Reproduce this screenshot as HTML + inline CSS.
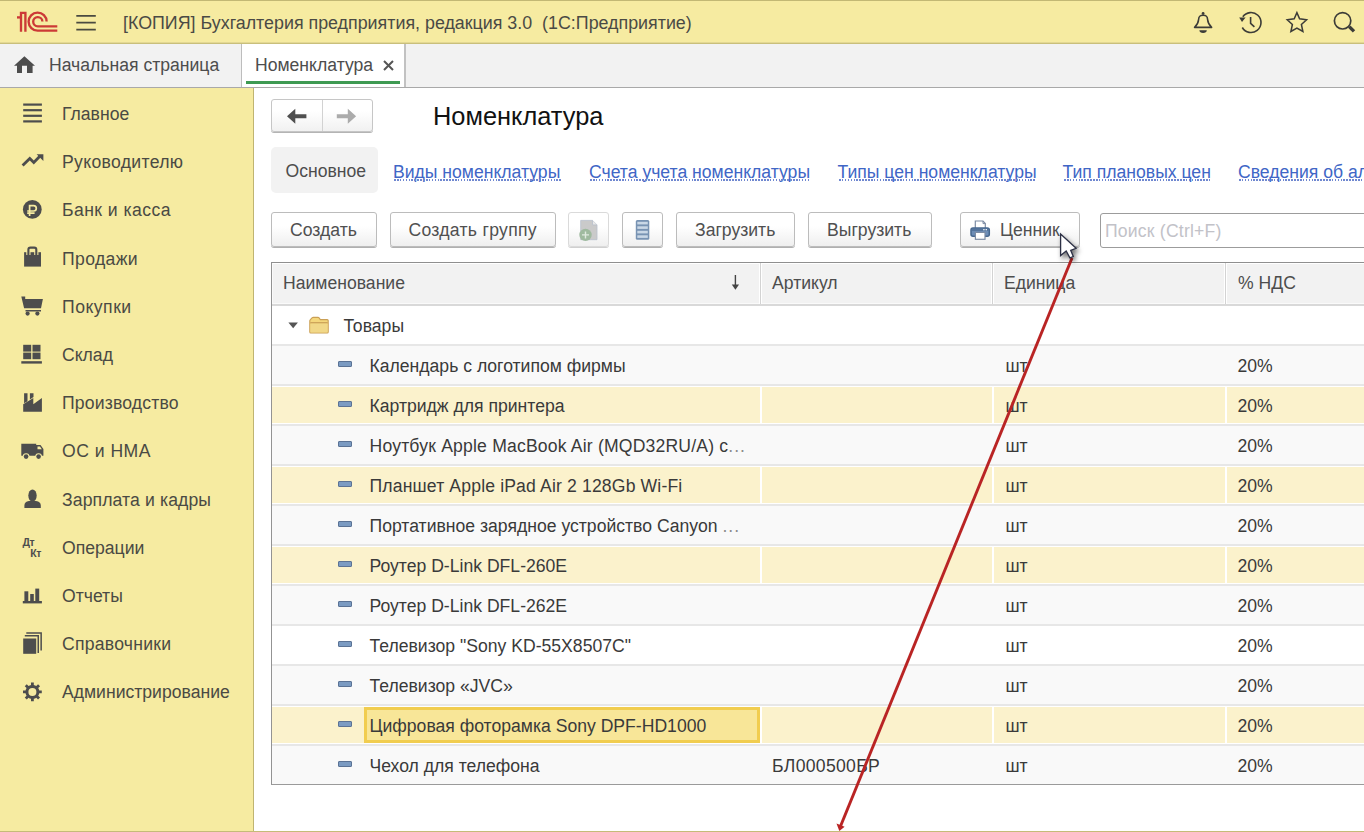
<!DOCTYPE html>
<html><head><meta charset="utf-8">
<style>
*{box-sizing:border-box;margin:0;padding:0}
html,body{width:1364px;height:832px;overflow:hidden;background:#fff}
body{position:relative;font-family:"Liberation Sans",sans-serif;font-size:17.6px;color:#4d4d4d}
.a{position:absolute}
.t{position:absolute;white-space:pre;line-height:20px;height:20px}
#hdr{left:0;top:0;width:1364px;height:44px;background:#f6eba1;border-top:1px solid #c2b874;border-bottom:1px solid #c9bf7b;box-shadow:inset 0 -1px 0 #e3d894}
#tabs{left:0;top:44px;width:1364px;height:44px;background:#f2f2f2;border-bottom:1px solid #a9a9a9}
#side{left:0;top:88px;width:254px;height:744px;background:#f6eba1;border-right:1px solid #c0b571}
#bot{left:0;top:831px;width:1364px;height:1px;background:#c5bb78}
.btn{position:absolute;height:36px;border:1px solid #bcbcbc;border-radius:3px;background:linear-gradient(#fff 40%,#efefef);box-shadow:0 1px 0 #b0b0b0}
.row{position:absolute;left:272px;width:1092px;height:40px;border-bottom:1px solid #e3e3e3}
.g{background:#f9f9f9}.w{background:#fff}.y{background:#fbf0cb}
.ic{position:absolute;width:14px;height:6px;background:#7b9bc2;border:1px solid #5b7395;border-radius:1px;left:338px}
</style></head><body>
<div id="hdr" class="a"></div>
<div id="tabs" class="a"></div>
<div id="side" class="a"></div>

<!-- header content -->
<svg class="a" style="left:0;top:0" width="1364" height="43">
  <g fill="none" stroke="#cc3a36" stroke-width="2.35">
    <path d="M17 17.4 H21.5"/><path d="M21 31.8 V12.9 H25.4 V31.8"/>
    <path d="M46.6 21.5 A9 9 0 1 0 37.8 30.6 H57.3"/>
    <path d="M42.4 21.5 A4.6 4.6 0 1 0 37.8 26.3 H57.3"/>
  </g>
  <g stroke="#4a4a40" stroke-width="1.6">
    <path d="M76.3 15.9 H95.8 M76.3 22.6 H95.8 M76.3 29.6 H95.8"/>
  </g>
</svg>
<div class="t" style="left:123px;top:13px;font-size:17.85px;color:#4a4a45">[КОПИЯ] Бухгалтерия предприятия, редакция 3.0  (1С:Предприятие)</div>


<svg class="a" style="left:1180px;top:0" width="184" height="43">
 <g fill="none" stroke="#3c3c38" stroke-width="1.6" transform="translate(-1180,0)">
  <path d="M1194.6 27.4 C1197.5 24.5 1198.4 22.5 1198.6 19.5 C1198.8 16.3 1199.6 15.3 1203.1 15.3 C1206.6 15.3 1207.4 16.3 1207.6 19.5 C1207.8 22.5 1208.7 24.5 1211.6 27.4 Z" stroke-linejoin="round"/>
  <path d="M1250.6 17 V23.3 L1254.4 26.8"/>
  <path d="M1242.8 16.8 A10 10 0 1 1 1242.3 27.5"/>
  <path d="M1296.9 12.6 L1299.6 18.7 L1306.6 19.8 L1301.4 24.5 L1302.9 31.5 L1296.9 28 L1290.9 31.5 L1292.4 24.5 L1287.2 19.8 L1294.2 18.7 Z" stroke-linejoin="miter" stroke-width="1.5"/>
  <circle cx="1342.6" cy="20.8" r="8.2" stroke-width="1.7"/>
 </g>
 <g fill="#3c3c38" transform="translate(-1180,0)">
  <circle cx="1203.1" cy="13.5" r="1.4"/>
  <path d="M1199.4 30.3 H1206.8 Q1206.6 32.9 1203.1 32.9 Q1199.6 32.9 1199.4 30.3 Z"/>
  <path d="M1239.2 17.4 L1245.6 17.6 L1242 22 Z"/>
  <path d="M1348 27.8 L1350.4 25.4 L1355.2 30.2 L1352.8 32.6 Z"/>
 </g>
</svg>

<!-- tabs -->
<div class="a" style="left:242px;top:44px;width:162px;height:43px;background:#fff"></div>
<div class="a" style="left:241px;top:44px;width:1px;height:43px;background:#bdbdbd"></div>
<div class="a" style="left:404px;top:44px;width:2px;height:43px;background:#c2c2c2"></div>
<div class="a" style="left:246px;top:81px;width:154px;height:3px;background:#3e9a52"></div>
<svg class="a" style="left:14px;top:56px" width="22" height="18"><path d="M10.4 0.2 L21 9.8 H18.6 V17 H13 V9.8 H8 V17 H3 V9.8 H0 Z" fill="#4d4d4d"/></svg>
<div class="t" style="left:49px;top:55px">Начальная страница</div>
<div class="t" style="left:255px;top:55px">Номенклатура</div>
<svg class="a" style="left:382px;top:59px" width="13" height="13"><path d="M2 2 L11 11 M11 2 L2 11" stroke="#555" stroke-width="2"/></svg>

<div class="t" style="left:62px;top:104.0px;color:#4a4a44">Главное</div>
<div class="t" style="left:62px;top:152.2px;color:#4a4a44;letter-spacing:0.33px">Руководителю</div>
<div class="t" style="left:62px;top:200.4px;color:#4a4a44;letter-spacing:0.44px">Банк и касса</div>
<div class="t" style="left:62px;top:248.6px;color:#4a4a44;letter-spacing:0.37px">Продажи</div>
<div class="t" style="left:62px;top:296.8px;color:#4a4a44;letter-spacing:0.5px">Покупки</div>
<div class="t" style="left:62px;top:345.0px;color:#4a4a44">Склад</div>
<div class="t" style="left:62px;top:393.2px;color:#4a4a44;letter-spacing:0.17px">Производство</div>
<div class="t" style="left:62px;top:441.4px;color:#4a4a44;letter-spacing:0.48px">ОС и НМА</div>
<div class="t" style="left:62px;top:489.6px;color:#4a4a44;letter-spacing:0.12px">Зарплата и кадры</div>
<div class="t" style="left:62px;top:537.8px;color:#4a4a44">Операции</div>
<div class="t" style="left:62px;top:586.0px;color:#4a4a44">Отчеты</div>
<div class="t" style="left:62px;top:634.2px;color:#4a4a44;letter-spacing:0.24px">Справочники</div>
<div class="t" style="left:62px;top:682.4px;color:#4a4a44">Администрирование</div>
<svg class="a" style="left:0;top:88px" width="253" height="744">
 <g fill="#4d4d4d" transform="translate(0,-88)">
  <rect x="23.2" y="103.5" width="18.7" height="2.2"/><rect x="23.2" y="109.1" width="18.7" height="2.2"/><rect x="23.2" y="114.7" width="18.7" height="2.2"/><rect x="23.2" y="120.3" width="18.7" height="2.2"/>
  <path d="M22.6 165.6 L29.8 158.4 L33.8 162.4 L39.6 156.6" fill="none" stroke="#4d4d4d" stroke-width="2.8"/>
  <path d="M36.6 154.2 H43.4 V161 Z"/>
  <circle cx="32.3" cy="209.4" r="9.4"/>
  <path d="M29.6 216 V205.6 H33.6 A2.7 2.7 0 0 1 33.6 211 H27.2 M27.2 213.2 H34.6" fill="none" stroke="#f6eba1" stroke-width="1.7"/>
  <path d="M24.1 252.2 H41 V266.6 H24.1 Z"/>
  <path d="M28.4 255 V249.6 Q28.4 247.6 30.4 247.6 H34.3 Q36.3 247.6 36.3 249.6 V255" fill="none" stroke="#f6eba1" stroke-width="4.2"/><path d="M28.4 255 V249.6 Q28.4 247.6 30.4 247.6 H34.3 Q36.3 247.6 36.3 249.6 V255" fill="none" stroke="#4d4d4d" stroke-width="2.1"/>
  <path d="M21.3 296.4 H25.2 L25.2 299.1 H42.9 L41 308.3 H24.1 Z"/>
  <rect x="25.5" y="310" width="15.5" height="1.5"/><circle cx="27.6" cy="313.6" r="2.1"/><circle cx="37.4" cy="313.6" r="2.1"/>
  <rect x="23.2" y="344.8" width="8" height="6.8"/><rect x="32.5" y="344.8" width="8" height="6.8"/><rect x="23.2" y="352.6" width="8" height="6.6"/><rect x="32.5" y="352.6" width="8" height="6.6"/>
  <rect x="21.3" y="361.2" width="20.6" height="2.4"/>
  <path d="M23.2 411.7 V404.2 L33.3 398 V404.2 L41.9 398 V411.7 Z"/>
  <path d="M24.1 393.2 H27.5 V401.2 L24.1 403.2 Z M29.9 393.2 H33.5 V397 L29.9 399.4 Z"/>
  <path d="M21.3 443.7 H36.2 V445.1 H40.5 L43.4 449 V455.7 H21.3 Z"/>
  <path d="M37.5 446.6 H40 L41.8 449.3 H37.5 Z" fill="#f6eba1"/>
  <circle cx="26.1" cy="456.6" r="3.4" fill="#f6eba1"/><circle cx="38.6" cy="456.6" r="3.4" fill="#f6eba1"/>
  <circle cx="26.1" cy="456.6" r="2.3"/><circle cx="38.6" cy="456.6" r="2.3"/>
  <ellipse cx="32.5" cy="495.6" rx="4.2" ry="6.2"/>
  <path d="M24.4 508.1 V505.5 Q24.4 501.5 29 501 H36 Q40.8 501.5 40.8 505.5 V508.1 Z"/>
  <text x="22.5" y="546.4" font-size="10.5" font-weight="bold" font-family="Liberation Sans" letter-spacing="-0.5">Дт</text>
  <text x="30.3" y="556.6" font-size="10.5" font-weight="bold" font-family="Liberation Sans" letter-spacing="-0.5">Кт</text>
  <rect x="22.8" y="601" width="19.1" height="2.4"/><rect x="24.4" y="591.3" width="3.9" height="10"/><rect x="30.2" y="594" width="3.6" height="7.5"/><rect x="35.3" y="588.6" width="3.9" height="12.5"/>
  <path d="M26.3 632.2 H41.9 V650.5 H40.4 V633.7 H26.3 Z"/>
  <path d="M24.8 635.1 H39 V652.9 H37.5 V636.6 H24.8 Z"/>
  <rect x="23.2" y="638.5" width="13" height="15.3"/>
 </g>
 <g transform="translate(32.4,603.9)">
  <path id="gear" fill="#4d4d4d" fill-rule="evenodd" d="M-1.39 -6.86 L-1.42 -9.39 L1.42 -9.39 L1.39 -6.86 A7.0 7.0 0 0 1 3.87 -5.83 L3.87 -5.83 L5.64 -7.65 L7.65 -5.64 L5.83 -3.87 A7.0 7.0 0 0 1 6.86 -1.39 L6.86 -1.39 L9.39 -1.42 L9.39 1.42 L6.86 1.39 A7.0 7.0 0 0 1 5.83 3.87 L5.83 3.87 L7.65 5.64 L5.64 7.65 L3.87 5.83 A7.0 7.0 0 0 1 1.39 6.86 L1.39 6.86 L1.42 9.39 L-1.42 9.39 L-1.39 6.86 A7.0 7.0 0 0 1 -3.87 5.83 L-3.87 5.83 L-5.64 7.65 L-7.65 5.64 L-5.83 3.87 A7.0 7.0 0 0 1 -6.86 1.39 L-6.86 1.39 L-9.39 1.42 L-9.39 -1.42 L-6.86 -1.39 A7.0 7.0 0 0 1 -5.83 -3.87 L-5.83 -3.87 L-7.65 -5.64 L-5.64 -7.65 L-3.87 -5.83 A7.0 7.0 0 0 1 -1.39 -6.86 Z M4.0 0 A4.0 4.0 0 1 0 -4.0 0 A4.0 4.0 0 1 0 4.0 0 Z"/>
 </g>
</svg>


<!-- main -->
<div class="a" style="left:271px;top:99px;width:102px;height:33px;border:1px solid #c6c6c6;border-radius:3px;background:linear-gradient(#fff 35%,#f1f1f1);box-shadow:0 1px 0 #b4b4b4"></div>
<div class="a" style="left:322px;top:100px;width:1px;height:31px;background:#d2d2d2"></div>
<svg class="a" style="left:280px;top:104px" width="84" height="24"><g transform="translate(-280,-104)">
 <path d="M287 116.2 L295.3 108.7 V114.3 H306.4 V118.2 H295.3 V123.7 Z" fill="#4f4f4f"/>
 <path d="M356.1 116.2 L347.8 108.7 V114.3 H336.8 V118.2 H347.8 V123.7 Z" fill="#ababab"/>
</g></svg>
<div class="t" style="left:433px;top:102px;height:28px;line-height:28px;font-size:25.4px;color:#111">Номенклатура</div>

<div class="a" style="left:271px;top:147px;width:107px;height:46px;background:#f2f2f2;border-radius:5px"></div>
<div class="t" style="left:285.5px;top:161.4px">Основное</div>
<div class="a" style="left:254px;top:150px;width:1110px;height:40px;overflow:hidden"><div class="t" style="left:139.0px;top:12px;color:#4066c6">Виды номенклатуры</div><div class="a" style="left:140.0px;top:29px;width:167px;height:1.6px;background:repeating-linear-gradient(90deg,#7088d0 0 1.6px,transparent 1.6px 2.9px)"></div><div class="t" style="left:335.0px;top:12px;color:#4066c6">Счета учета номенклатуры</div><div class="a" style="left:336.0px;top:29px;width:220px;height:1.6px;background:repeating-linear-gradient(90deg,#7088d0 0 1.6px,transparent 1.6px 2.9px)"></div><div class="t" style="left:583.5px;top:12px;color:#4066c6">Типы цен номенклатуры</div><div class="a" style="left:584.5px;top:29px;width:196.5px;height:1.6px;background:repeating-linear-gradient(90deg,#7088d0 0 1.6px,transparent 1.6px 2.9px)"></div><div class="t" style="left:808.5px;top:12px;color:#4066c6">Тип плановых цен</div><div class="a" style="left:809.5px;top:29px;width:146.5px;height:1.6px;background:repeating-linear-gradient(90deg,#7088d0 0 1.6px,transparent 1.6px 2.9px)"></div><div class="t" style="left:984.0px;top:12px;color:#4066c6">Сведения об алкогольной продукции</div><div class="a" style="left:985.0px;top:29px;width:400px;height:1.6px;background:repeating-linear-gradient(90deg,#7088d0 0 1.6px,transparent 1.6px 2.9px)"></div></div>
<div class="btn" style="left:271px;top:212px;width:105.5px;height:35px"></div><div class="t" style="left:290px;top:220px;color:#505050">Создать</div>
<div class="btn" style="left:390px;top:212px;width:165.5px;height:35px"></div><div class="t" style="left:408.5px;top:220px;color:#505050;letter-spacing:0.28px">Создать группу</div>
<div class="btn" style="left:676px;top:212px;width:119.0px;height:35px"></div><div class="t" style="left:695px;top:220px;color:#505050">Загрузить</div>
<div class="btn" style="left:808px;top:212px;width:123.5px;height:35px"></div><div class="t" style="left:827px;top:220px;color:#505050">Выгрузить</div>
<div class="btn" style="left:960px;top:212px;width:120.0px;height:35px"></div><div class="t" style="left:1000px;top:220px;color:#505050">Ценник</div>
<div class="btn" style="left:568px;top:212px;width:41px;height:35px;border-color:#dadada;box-shadow:0 1px 0 #d0d0d0"></div>
<div class="btn" style="left:622px;top:212px;width:41px;height:35px"></div>
<svg class="a" style="left:570px;top:215px" width="100" height="30"><g transform="translate(-570,-215)">
 <path d="M580.7 220.4 H592.5 L597 224.9 V239.7 H580.7 Z" fill="#cacaca" stroke="#b8bfcb" stroke-width="0.8"/>
 <path d="M592.5 220.4 V224.9 H597" fill="#e8e8e8" stroke="#b8bfcb" stroke-width="0.8"/>
 <circle cx="585.5" cy="234.9" r="6.2" fill="#9fba9f"/>
 <path d="M585.5 231.4 V238.4 M582 234.9 H589" stroke="#dfe9df" stroke-width="1.4"/>
 <rect x="635.8" y="220.1" width="13.5" height="19.6" rx="1.5" fill="#7893b3"/>
 <rect x="637.3" y="221.8" width="10.5" height="2.6" fill="#c9d7e6"/><rect x="637.3" y="226.3" width="10.5" height="2.6" fill="#c9d7e6"/><rect x="637.3" y="230.8" width="10.5" height="2.6" fill="#c9d7e6"/><rect x="637.3" y="235.3" width="10.5" height="2.6" fill="#c9d7e6"/>
</g></svg>
<svg class="a" style="left:968px;top:218px" width="26" height="24"><g transform="translate(-968,-218)">
 <path d="M975.3 228 V221 H983 L985.3 223.4 V228" fill="#fff" stroke="#7d8ca3" stroke-width="1.2"/>
 <path d="M983 221 V223.6 H985.3" fill="none" stroke="#7d8ca3" stroke-width="1"/>
 <rect x="971" y="227.9" width="18.3" height="8.4" rx="2" fill="#6d8db6" stroke="#46678f" stroke-width="1.5"/>
 <rect x="972" y="229.3" width="16.3" height="1.4" fill="#4a6a92"/>
 <rect x="983.2" y="229.1" width="1.4" height="1.2" fill="#fff"/><rect x="985.6" y="229.1" width="1.4" height="1.2" fill="#fff"/>
 <rect x="975.4" y="232.4" width="9.6" height="6.9" fill="#fff" stroke="#7d8ca3" stroke-width="1.2"/>
</g></svg>
<div class="a" style="left:1100px;top:213px;width:300px;height:35px;border:1px solid #9c9c9c;border-radius:3px;background:#fff"></div>
<div class="t" style="left:1105px;top:221px;color:#c2c2c8;letter-spacing:0.2px">Поиск (Ctrl+F)</div>


<!-- table -->
<div class="a" style="left:271px;top:262px;width:1093px;height:523px;border-top:1px solid #8f8f8f;border-left:1px solid #939393;border-bottom:1px solid #9a9a9a;background:#fff"></div>
<div class="a" style="left:272px;top:263px;width:1092px;height:41px;background:#f2f2f2;border-top:1px solid #fff;border-left:1px solid #fafafa;border-bottom:1px solid #fafafa"></div>
<div class="a" style="left:272px;top:304px;width:1092px;height:2px;background:#d9d9d9"></div>
<div class="a" style="left:759px;top:264px;width:3px;height:40px;background:#fff"></div><div class="a" style="left:760px;top:263px;width:1px;height:41px;background:#d3d3d3"></div>
<div class="a" style="left:991px;top:264px;width:3px;height:40px;background:#fff"></div><div class="a" style="left:992px;top:263px;width:1px;height:41px;background:#d3d3d3"></div>
<div class="a" style="left:1224px;top:264px;width:3px;height:40px;background:#fff"></div><div class="a" style="left:1225px;top:263px;width:1px;height:41px;background:#d3d3d3"></div>
<div class="t" style="left:283px;top:272.5px">Наименование</div>
<svg class="a" style="left:730px;top:274px" width="12" height="17"><path d="M5.4 1 V13" stroke="#444" stroke-width="1.4"/><path d="M1.8 10.5 H9 L5.4 15.8 Z" fill="#444"/></svg>
<div class="t" style="left:772px;top:272.5px">Артикул</div>
<div class="t" style="left:1004px;top:272.5px">Единица</div>
<div class="t" style="left:1238px;top:272.5px">% НДС</div>
<svg class="a" style="left:286px;top:315px" width="46" height="22"><g transform="translate(-286,-315)">
 <path d="M288.4 322.4 H297.9 L293.15 328.3 Z" fill="#555"/>
 <path d="M309.8 332 V321 Q309.8 320.2 310.4 319.6 L312 317.9 Q312.5 317.4 313.3 317.4 H318 Q318.7 317.4 319.1 317.9 L320.3 319.6 H327.2 Q328.2 319.6 328.2 320.6 V332 Q328.2 333 327.2 333 H310.8 Q309.8 333 309.8 332 Z" fill="#f4d77c" stroke="#caa056" stroke-width="1.1"/>
 <path d="M310.3 322.8 H327.7" stroke="#caa056" stroke-width="1.4"/>
 <rect x="310.4" y="323.6" width="17.2" height="8.8" fill="#f1d888"/>
</g></svg>
<div class="t" style="left:343.5px;top:316px;color:#3a3a3a">Товары</div>
<div class="a" style="left:272px;top:344px;width:1092px;height:2px;background:#e7e7e7"></div><div class="a" style="left:272px;top:346px;width:1092px;height:38px;background:#f9f9f9"></div><div class="ic" style="top:360.7px"></div><div class="t" style="left:369.5px;top:356px;color:#3a3a3a">Календарь с логотипом фирмы</div><div class="t" style="left:1005.5px;top:356px;color:#3a3a3a">шт</div><div class="t" style="left:1237.5px;top:356px;color:#3a3a3a">20%</div>
<div class="a" style="left:272px;top:384px;width:1092px;height:2px;background:#e7e7e7"></div><div class="a" style="left:272px;top:386px;width:1092px;height:38px;background:#fff"></div><div class="a" style="left:272px;top:387px;width:1092px;height:36px;background:#fbf2cc"></div><div class="a" style="left:760px;top:386px;width:2px;height:38px;background:#fff"></div><div class="a" style="left:992px;top:386px;width:2px;height:38px;background:#fff"></div><div class="a" style="left:1225px;top:386px;width:2px;height:38px;background:#fff"></div><div class="ic" style="top:400.7px"></div><div class="t" style="left:369.5px;top:396px;color:#3a3a3a">Картридж для принтера</div><div class="t" style="left:1005.5px;top:396px;color:#3a3a3a">шт</div><div class="t" style="left:1237.5px;top:396px;color:#3a3a3a">20%</div>
<div class="a" style="left:272px;top:424px;width:1092px;height:2px;background:#e7e7e7"></div><div class="a" style="left:272px;top:426px;width:1092px;height:38px;background:#f9f9f9"></div><div class="ic" style="top:440.7px"></div><div class="t" style="left:369.5px;top:436px;color:#3a3a3a"><span style="letter-spacing:0.18px">Ноутбук Apple MacBook Air (MQD32RU/A) с</span><span style="color:#8c8c8c;letter-spacing:1px">...</span></div><div class="t" style="left:1005.5px;top:436px;color:#3a3a3a">шт</div><div class="t" style="left:1237.5px;top:436px;color:#3a3a3a">20%</div>
<div class="a" style="left:272px;top:464px;width:1092px;height:2px;background:#e7e7e7"></div><div class="a" style="left:272px;top:466px;width:1092px;height:38px;background:#fff"></div><div class="a" style="left:272px;top:467px;width:1092px;height:36px;background:#fbf2cc"></div><div class="a" style="left:760px;top:466px;width:2px;height:38px;background:#fff"></div><div class="a" style="left:992px;top:466px;width:2px;height:38px;background:#fff"></div><div class="a" style="left:1225px;top:466px;width:2px;height:38px;background:#fff"></div><div class="ic" style="top:480.7px"></div><div class="t" style="left:369.5px;top:476px;color:#3a3a3a"><span style="letter-spacing:0.15px">Планшет Apple iPad Air 2 128Gb Wi-Fi</span></div><div class="t" style="left:1005.5px;top:476px;color:#3a3a3a">шт</div><div class="t" style="left:1237.5px;top:476px;color:#3a3a3a">20%</div>
<div class="a" style="left:272px;top:504px;width:1092px;height:2px;background:#e7e7e7"></div><div class="a" style="left:272px;top:506px;width:1092px;height:38px;background:#f9f9f9"></div><div class="ic" style="top:520.7px"></div><div class="t" style="left:369.5px;top:516px;color:#3a3a3a">Портативное зарядное устройство Canyon <span style="color:#8c8c8c;letter-spacing:1px">...</span></div><div class="t" style="left:1005.5px;top:516px;color:#3a3a3a">шт</div><div class="t" style="left:1237.5px;top:516px;color:#3a3a3a">20%</div>
<div class="a" style="left:272px;top:544px;width:1092px;height:2px;background:#e7e7e7"></div><div class="a" style="left:272px;top:546px;width:1092px;height:38px;background:#fff"></div><div class="a" style="left:272px;top:547px;width:1092px;height:36px;background:#fbf2cc"></div><div class="a" style="left:760px;top:546px;width:2px;height:38px;background:#fff"></div><div class="a" style="left:992px;top:546px;width:2px;height:38px;background:#fff"></div><div class="a" style="left:1225px;top:546px;width:2px;height:38px;background:#fff"></div><div class="ic" style="top:560.7px"></div><div class="t" style="left:369.5px;top:556px;color:#3a3a3a">Роутер D-Link DFL-260E</div><div class="t" style="left:1005.5px;top:556px;color:#3a3a3a">шт</div><div class="t" style="left:1237.5px;top:556px;color:#3a3a3a">20%</div>
<div class="a" style="left:272px;top:584px;width:1092px;height:2px;background:#e7e7e7"></div><div class="a" style="left:272px;top:586px;width:1092px;height:38px;background:#f9f9f9"></div><div class="ic" style="top:600.7px"></div><div class="t" style="left:369.5px;top:596px;color:#3a3a3a">Роутер D-Link DFL-262E</div><div class="t" style="left:1005.5px;top:596px;color:#3a3a3a">шт</div><div class="t" style="left:1237.5px;top:596px;color:#3a3a3a">20%</div>
<div class="a" style="left:272px;top:624px;width:1092px;height:2px;background:#e7e7e7"></div><div class="a" style="left:272px;top:626px;width:1092px;height:38px;background:#ffffff"></div><div class="ic" style="top:640.7px"></div><div class="t" style="left:369.5px;top:636px;color:#3a3a3a">Телевизор &quot;Sony KD-55X8507C&quot;</div><div class="t" style="left:1005.5px;top:636px;color:#3a3a3a">шт</div><div class="t" style="left:1237.5px;top:636px;color:#3a3a3a">20%</div>
<div class="a" style="left:272px;top:664px;width:1092px;height:2px;background:#e7e7e7"></div><div class="a" style="left:272px;top:666px;width:1092px;height:38px;background:#f9f9f9"></div><div class="ic" style="top:680.7px"></div><div class="t" style="left:369.5px;top:676px;color:#3a3a3a">Телевизор «JVC»</div><div class="t" style="left:1005.5px;top:676px;color:#3a3a3a">шт</div><div class="t" style="left:1237.5px;top:676px;color:#3a3a3a">20%</div>
<div class="a" style="left:272px;top:704px;width:1092px;height:2px;background:#e7e7e7"></div><div class="a" style="left:272px;top:706px;width:1092px;height:38px;background:#fff"></div><div class="a" style="left:272px;top:707px;width:1092px;height:36px;background:#fbf2cc"></div><div class="a" style="left:760px;top:706px;width:2px;height:38px;background:#fff"></div><div class="a" style="left:992px;top:706px;width:2px;height:38px;background:#fff"></div><div class="a" style="left:1225px;top:706px;width:2px;height:38px;background:#fff"></div><div class="a" style="left:364px;top:707px;width:396px;height:36px;background:#f8e698;border:3px solid #f1cd4f"></div><div class="ic" style="top:720.7px"></div><div class="t" style="left:369.5px;top:716px;color:#3a3a3a">Цифровая фоторамка Sony DPF-HD1000</div><div class="t" style="left:1005.5px;top:716px;color:#3a3a3a">шт</div><div class="t" style="left:1237.5px;top:716px;color:#3a3a3a">20%</div>
<div class="a" style="left:272px;top:744px;width:1092px;height:2px;background:#e7e7e7"></div><div class="a" style="left:272px;top:746px;width:1092px;height:38px;background:#f9f9f9"></div><div class="ic" style="top:760.7px"></div><div class="t" style="left:369.5px;top:756px;color:#3a3a3a">Чехол для телефона</div><div class="t" style="left:772px;top:756px;color:#3a3a3a;letter-spacing:0.3px">БЛ000500БР</div><div class="t" style="left:1005.5px;top:756px;color:#3a3a3a">шт</div><div class="t" style="left:1237.5px;top:756px;color:#3a3a3a">20%</div>
<div class="a" style="left:272px;top:784px;width:1092px;height:1px;background:#9a9a9a"></div>
<svg class="a" style="left:0;top:0" width="1364" height="832">
 <line x1="1072" y1="258" x2="840.6" y2="826" stroke="#b92424" stroke-width="2.9"/>
 <path d="M839.3 831 L836.5 823.5 L844.6 826.8 Z" fill="#b92424"/>
</svg>
<svg class="a" style="left:1050px;top:225px;filter:drop-shadow(2px 3px 2.5px rgba(0,0,0,0.55))" width="40" height="45">
 <path transform="translate(-1050,-225)" d="M1060.6 234 V255.6 L1066.2 251 L1069.9 257.9 L1073.3 256.5 L1070.7 250.3 L1076.1 248.3 Z" fill="#fff" stroke="#2c3045" stroke-width="1.3" stroke-linejoin="miter"/>
</svg>

<div id="bot" class="a"></div>
</body></html>
